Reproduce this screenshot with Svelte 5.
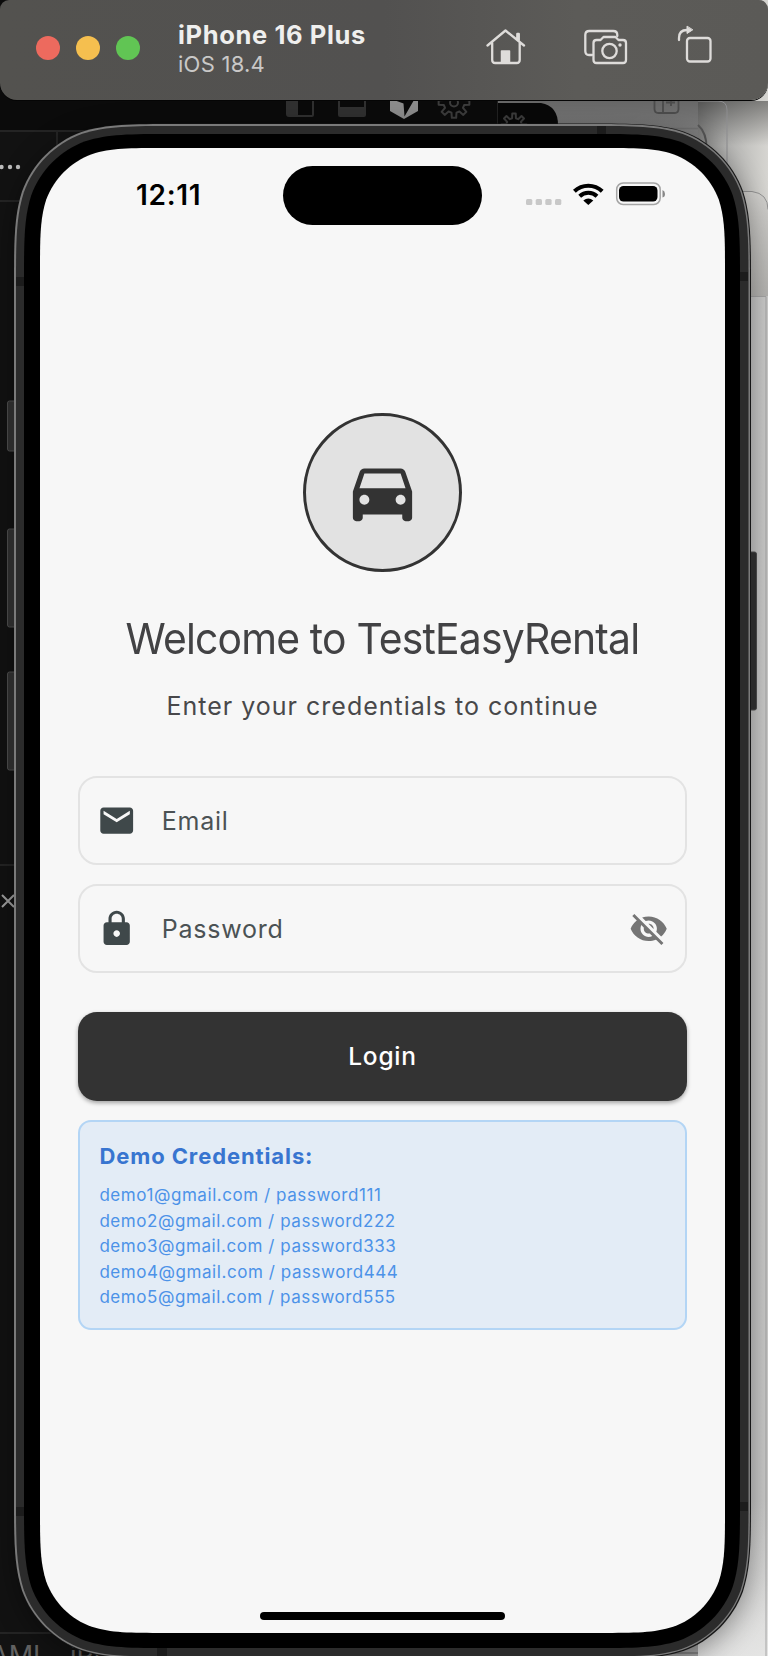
<script>
  const demoAccounts = [1, 2, 3, 4, 5].map((n) => `demo${n}@gmail.com / password${n}${n}${n}`);

  // Rounded rectangle with continuous-curvature corners.
  function squircle(x, y, w, h, r) {
    const a = 1.528665 * r, b = 1.08849 * r, c = 0.868407 * r, d = 0.631494 * r;
    const e = 0.0749114 * r, f = 0.372824 * r, g = 0.16906 * r;
    const X = x + w, Y = y + h;
    return `M${x + a} ${y}H${X - a}C${X - b} ${y} ${X - c} ${y} ${X - d} ${y + e}C${X - f} ${y + g} ${X - g} ${y + f} ${X - e} ${y + d}C${X} ${y + c} ${X} ${y + b} ${X} ${y + a}V${Y - a}C${X} ${Y - b} ${X} ${Y - c} ${X - e} ${Y - d}C${X - g} ${Y - f} ${X - f} ${Y - g} ${X - d} ${Y - e}C${X - c} ${Y} ${X - b} ${Y} ${X - a} ${Y}H${x + a}C${x + b} ${Y} ${x + c} ${Y} ${x + d} ${Y - e}C${x + f} ${Y - g} ${x + g} ${Y - f} ${x + e} ${Y - d}C${x} ${Y - c} ${x} ${Y - b} ${x} ${Y - a}V${y + a}C${x} ${y + b} ${x} ${y + c} ${x + e} ${y + d}C${x + g} ${y + f} ${x + f} ${y + g} ${x + d} ${y + e}C${x + c} ${y} ${x + b} ${y} ${x + a} ${y}Z`;
  }

  // Eight-toothed gear outline.
  function gear(cx, cy, outer, inner) {
    const points = [];
    for (let i = 0; i < 8; i++) {
      for (const [offset, r] of [[-0.24, inner], [-0.14, outer], [0.14, outer], [0.24, inner]]) {
        const t = (i * Math.PI) / 4 + offset;
        points.push(`${(cx + r * Math.cos(t)).toFixed(2)},${(cy + r * Math.sin(t)).toFixed(2)}`);
      }
    }
    return points.join(' ');
  }
</script>

<main class="stage">
  <svg class="backdrop" width="768" height="1656" viewBox="0 0 768 1656" aria-hidden="true">
    <defs>
      <linearGradient id="desk" x1="0" x2="1" y1="0" y2="0">
        <stop offset="0" stop-color="#8c8c8b" /><stop offset="0.4" stop-color="#b3b3b1" /><stop offset="1" stop-color="#d6d5d1" />
      </linearGradient>
      <linearGradient id="side" x1="0" x2="1" y1="0" y2="0">
        <stop offset="0" stop-color="#bcbcbc" /><stop offset="1" stop-color="#cbcbca" />
      </linearGradient>
      <linearGradient id="win" x1="0" x2="0" y1="0" y2="1">
        <stop offset="0" stop-color="#666" /><stop offset="1" stop-color="#949494" />
      </linearGradient>
      <linearGradient id="card" x1="0" x2="0" y1="0" y2="1">
        <stop offset="0" stop-color="#cfcecb" /><stop offset="1" stop-color="#b4b3b0" />
      </linearGradient>
      <linearGradient id="shade" x1="0" x2="0" y1="0" y2="1">
        <stop offset="0" stop-color="#000" stop-opacity="0.4" /><stop offset="1" stop-color="#000" stop-opacity="0" />
      </linearGradient>
      <linearGradient id="lift" x1="0" x2="0" y1="0" y2="1">
        <stop offset="0" stop-color="#f0f0ef" stop-opacity="0" /><stop offset="1" stop-color="#f0f0ef" stop-opacity="0.7" />
      </linearGradient>
      <filter id="soft" x="-20%" y="-10%" width="140%" height="120%"><feGaussianBlur stdDeviation="14" /></filter>
    </defs>

    <rect width="768" height="1656" fill="#121212" />
    <rect width="560" height="130" fill="#0b0b0b" />
    <path d="M0 131H110M57 131V190M0 201H20M0 865H16M0 1633H80" stroke="#242424" stroke-width="2" fill="none" />

    <rect x="698" y="0" width="70" height="1656" fill="url(#desk)" />
    <rect x="698" y="101" width="70" height="45" fill="url(#shade)" />
    <path d="M698 101h20q9 0 9 9v90" fill="none" stroke="#8d8d90" />
    <rect x="497" y="100" width="201" height="60" fill="url(#win)" />
    <path d="M660 128.500H698" stroke="#707070" stroke-width="1.500" />
    <path d="M497 103h44q17 3 17 22h-61z" fill="#080808" />
    <path d="M497.500 101V126" stroke="#222" />
    <path d="M698 125q9 8 8.500 24" fill="none" stroke="#555" stroke-width="2" />
    <path d="M740 192h12q16 2 16 18v87h-28z" fill="url(#card)" />
    <path d="M740 191.500h12q16 2 16 18" fill="none" stroke="#929292" />
    <rect x="698" y="296" width="70" height="1360" fill="url(#side)" />
    <rect x="698" y="1500" width="70" height="156" fill="url(#lift)" />
    <path d="M750 296.500H766V1656" fill="none" stroke="#a4a4a4" />
    <path d="M640 1600h58v56h-58z" fill="#a3a3a3" />
    <path d="M670 1653H698" stroke="#777" stroke-width="1.500" />

    <!-- Toolbar glyphs of the editor window underneath -->
    <path d="M286 100h28v15q0 2-2 2h-23q-3 0-3-3z" fill="#303030" /><path d="M298 100h14v15h-14z" fill="#0a0a0a" />
    <path d="M338 100h28v15q0 2-2 2h-24q-2 0-2-2z" fill="#303030" /><path d="M340 100h24v7h-24z" fill="#0a0a0a" />
    <path d="M390 100h28v11l-14 8-14-8z" fill="#8c8c8c" /><path d="M394 100h20l-9.500 16.500-1-13z" fill="#0a0a0a" />
    <g fill="none" stroke="#3c3c3c" stroke-width="2" stroke-linejoin="round">
      <polygon points={gear(454, 102.5, 15.5, 10.5)} />
      <circle cx="454" cy="102.500" r="4" />
      <polygon points={gear(514, 126, 12.5, 8)} />
    </g>
    <path d="M654.500 101v8q0 4 4 4h16q4 0 4-4v-8M663 101v12M666 102.500h9M671 101v5" fill="none" stroke="#4c4c4c" stroke-width="1.800" />
    <g fill="#bcbcbc"><circle cx="1.500" cy="167" r="2.200" /><circle cx="10" cy="167" r="2.200" /><circle cx="18" cy="167" r="2.200" /></g>
    <path d="M2 895l12 12M14 895l-12 12" stroke="#a0a0a0" stroke-width="2" />
    <text x="-10" y="1665" class="ghost">AML</text><text x="70" y="1665" class="ghost">iPhone</text>

    <path d={squircle(14, 130, 737, 1535, 107)} fill="#000" opacity="0.38" filter="url(#soft)" />

    <!-- Hardware buttons -->
    <g fill="#2b2b2b" stroke="#454545">
      <rect x="7.500" y="401" width="12" height="50" rx="2" /><rect x="7.500" y="529" width="12" height="98" rx="2" />
      <rect x="7.500" y="672" width="12" height="98" rx="2" /><rect x="744" y="552" width="12.500" height="158" rx="2" />
    </g>

    <!-- Phone body -->
    <path d={squircle(14, 123.5, 737, 1535.5, 107)} fill="#161616" />
    <path d={squircle(14, 124, 736, 1534, 107)} fill="#7a7a7a" />
    <path d={squircle(16, 126, 732.5, 1530.5, 105)} fill="#2b2b2b" />
    <path d="M597 126h9v9h-9zM157 1647h10v9h-10zM740 272h8v9h-8zM740 1502h8v9h-8zM16 277h8v9h-8zM16 1507h8v9h-8z" fill="#1c1c1c" />
    <path d={squircle(24, 134, 716, 1514, 97)} fill="#000" />
    <path d={squircle(40, 148, 685, 1485, 82)} fill="#f7f7f7" />
  </svg>

  <header class="toolbar">
    <div class="lights"><i class="red"></i><i class="amber"></i><i class="green"></i></div>
    <div class="device"><strong>iPhone 16 Plus</strong><span>iOS 18.4</span></div>
    <svg class="tools" width="240" height="60" viewBox="480 20 240 60" fill="none" stroke="#dedcda" stroke-width="2.300" stroke-linecap="round" stroke-linejoin="round">
      <path d="M487.500 45.500L505.500 30.500 524 45.500M492.200 43v17q0 3 3 3h21.500q3 0 3-3V43M517.300 38v-4h1.500V40" />
      <path d="M501.500 63V51h8v12z" fill="#dedcda" stroke-width="1.500" />
      <path d="M592 55h-3q-3.700 0-3.700-4V35q0-4 4-4h24q4 0 4 4v1" />
      <path d="M593.500 43q0-3 3-3h4l3-3h12l3 3h4.500q3 0 3 3v17q0 3-3 3h-26.500q-3 0-3-3z" />
      <circle cx="609.500" cy="51" r="7.200" /><circle cx="620" cy="45" r="1.700" fill="#dedcda" stroke="none" />
      <rect x="687" y="38" width="23.500" height="23.500" rx="3" />
      <path d="M679 40v-2q0-8 8-8h1" /><path d="M687 26.500v7l5.500-3.500z" fill="#dedcda" stroke-width="1" />
    </svg>
  </header>

  <section class="screen">
    <div class="status">
      <time>12:11</time>
      <div class="island"></div>
      <svg class="signals" width="140" height="24" viewBox="526 182 140 24">
        <g fill="#c8c8c8"><rect x="526" y="199" width="6.300" height="6" rx="1.500" /><rect x="535.700" y="199" width="6.300" height="6" rx="1.500" /><rect x="545.300" y="199" width="6.300" height="6" rx="1.500" /><rect x="555" y="199" width="6.300" height="6" rx="1.500" /></g>
        <g fill="none" stroke="#000" stroke-width="4"><path d="M574.400 191.300A20 20 0 0 1 602.200 191.300M579.700 196.300A12.500 12.500 0 0 1 597 196.300" /></g>
        <path d="M583.300 200.500q5-4 10 0l-5 4.500z" />
        <rect x="616.700" y="183" width="43.500" height="21.500" rx="6.500" fill="none" stroke="#a5a5a5" stroke-width="1.500" />
        <rect x="619" y="186" width="38.500" height="15.500" rx="4.500" /><path d="M662.500 190q2.500 1 2.500 4t-2.500 3.500z" fill="#888" />
      </svg>
    </div>

    <div class="content">
      <div class="badge">
        <svg width="79" height="79" viewBox="0 0 24 24" fill="#333"><path d="M18.920 6.010C18.720 5.420 18.160 5 17.500 5h-11c-.66 0-1.210.42-1.420 1.010L3 12v8c0 .55.45 1 1 1h1c.55 0 1-.45 1-1v-1h12v1c0 .55.45 1 1 1h1c.55 0 1-.45 1-1v-8l-2.080-5.990zM6.500 16c-.83 0-1.500-.67-1.500-1.500S5.670 13 6.500 13s1.500.67 1.500 1.500S7.330 16 6.500 16zm11 0c-.83 0-1.500-.67-1.500-1.500s.67-1.500 1.500-1.500 1.500.67 1.500 1.500-.67 1.500-1.500 1.500zM5 11l1.500-4.500h11L19 11H5z" /></svg>
      </div>
      <h1><span>Welcome to TestEasyRental</span></h1>
      <p class="hint">Enter your credentials to continue</p>

      <div class="field">
        <svg width="39.400" height="39.400" viewBox="0 0 24 24" fill="#3f484a"><path d="M20 4H4c-1.100 0-1.990.9-1.990 2L2 18c0 1.100.9 2 2 2h16c1.100 0 2-.9 2-2V6c0-1.100-.9-2-2-2zm0 4l-8 5-8-5V6l8 5 8-5v2z" /></svg>
        <span>Email</span>
      </div>
      <div class="field second">
        <svg width="39.400" height="39.400" viewBox="0 0 24 24" fill="#3f484a"><path d="M18 8h-1V6c0-2.760-2.240-5-5-5S7 3.240 7 6v2H6c-1.100 0-2 .9-2 2v10c0 1.100.9 2 2 2h12c1.100 0 2-.9 2-2V10c0-1.100-.9-2-2-2zm-6 9c-1.100 0-2-.9-2-2s.9-2 2-2 2 .9 2 2-.9 2-2 2zm3.100-9H8.900V6c0-1.710 1.390-3.100 3.100-3.100 1.710 0 3.100 1.390 3.100 3.100v2z" /></svg>
        <span>Password</span>
        <svg class="eye" width="39.400" height="39.400" viewBox="0 0 24 24" fill="#757575"><path d="M12 7c2.760 0 5 2.240 5 5 0 .65-.13 1.260-.36 1.830l2.920 2.920c1.510-1.260 2.700-2.890 3.430-4.750-1.730-4.390-6-7.500-11-7.500-1.400 0-2.740.25-3.980.7l2.160 2.160C10.740 7.130 11.350 7 12 7zM2 4.270l2.280 2.280.46.46C3.080 8.300 1.780 10.020 1 12c1.730 4.390 6 7.500 11 7.500 1.550 0 3.030-.3 4.380-.84l.42.42L19.730 22 21 20.730 3.270 3 2 4.270zM7.530 9.800l1.550 1.550c-.05.21-.08.43-.08.65 0 1.660 1.340 3 3 3 .22 0 .44-.03.65-.08l1.550 1.550c-.67.33-1.410.53-2.200.53-2.760 0-5-2.240-5-5 0-.79.2-1.530.53-2.200zm4.310-.78l3.150 3.150.02-.16c0-1.660-1.340-3-3-3l-.17.010z" /></svg>
      </div>

      <button type="button">Login</button>

      <div class="demo">
        <h2>Demo Credentials:</h2>
        {#each demoAccounts as account}<p>{account}</p>{/each}
      </div>
    </div>
    <div class="homebar"></div>
  </section>
</main>

<style>
  :global(body) { margin: 0; background: #101010; }
  .stage { position: relative; width: 768px; height: 1656px; overflow: hidden; font-family: Inter, "Liberation Sans", sans-serif; font-kerning: normal; }
  .backdrop { position: absolute; left: 0; top: 0; }
  .ghost { font-size: 27px; fill: #626262; }
  h1, h2, p { margin: 0; }

  .toolbar { position: relative; box-sizing: border-box; height: 100px; display: flex; align-items: flex-start; padding: 0 48px 0 36px; border-radius: 9px 9px 17px 17px; background: linear-gradient(90deg, #53524f, #525150 50%, #5c5b58 75%, #5b5a57); box-shadow: 0 1px 0 #050505; }
  .lights { display: flex; gap: 16px; padding-top: 36px; }
  .lights i { width: 24px; height: 24px; border-radius: 50%; }
  .red { background: #ed6a5e; }
  .amber { background: #f5bf4f; }
  .green { background: #61c554; }
  .device { display: flex; flex-direction: column; width: 220px; padding: 20px 0 0 38px; white-space: nowrap; }
  .device strong { font-size: 25.500px; line-height: 30px; letter-spacing: .62px; color: #efefee; font-weight: 700; }
  .device span { font-size: 22px; line-height: 28px; letter-spacing: .25px; color: #c9c8c7; }
  .tools { margin: 20px 0 0 auto; }

  .screen { position: relative; display: flex; flex-direction: column; width: 685px; height: 1485px; margin: 48px 0 0 40px; }
  .status { display: flex; align-items: flex-start; height: 77px; padding-top: 18px; box-sizing: border-box; }
  time { width: 147px; padding: 13px 0 0 96px; font-size: 28px; line-height: 32px; letter-spacing: .7px; font-weight: 600; }
  .island { width: 199px; height: 58.500px; border-radius: 30px; background: #000; }
  .signals { margin: 16px 0 0 44px; }

  .content { display: flex; flex-direction: column; margin: 187px 38.400px 0 38.400px; }
  .badge { box-sizing: border-box; width: 159.500px; height: 159.500px; margin-top: .5px; align-self: center; border: 3px solid #333; border-radius: 50%; background: #e2e2e2; display: grid; place-items: center; }
  .badge svg { margin-top: -1px; }
  h1 { margin-top: 40px; font-size: 43px; line-height: 52px; font-weight: 400; letter-spacing: -.85px; color: #424244; text-align: center; white-space: nowrap; }
  h1 span { display: inline-block; transform: scaleX(.95); }
  .hint { margin-top: 27px; font-size: 25px; line-height: 30px; letter-spacing: 1px; color: #48484a; text-align: center; }
  .field { box-sizing: border-box; height: 89px; margin-top: 55px; padding: 0 16px 0 17px; border: 2px solid #e3e3e3; border-radius: 19px; display: flex; align-items: center; font-size: 25px; letter-spacing: .75px; color: #4b5254; }
  .field.second { margin-top: 19px; }
  .field span { margin-left: 25px; padding-top: 1px; }
  .eye { margin-left: auto; }
  button { height: 89px; margin-top: 39px; padding: 0 0 1px; border: 0; border-radius: 19px; background: #333; color: #fff; font: 500 24.500px Inter, sans-serif; letter-spacing: .75px; box-shadow: 0 2px 4px rgba(0, 0, 0, .35); }
  .demo { box-sizing: border-box; height: 210px; margin-top: 19px; padding: 21px 19px; border: 2px solid #b3d5f5; border-radius: 13px; background: #e3ecf6; }
  h2 { margin-bottom: 14px; font-size: 22px; line-height: 26px; letter-spacing: .9px; font-weight: 650; color: #3875d0; }
  .demo p { font-size: 17px; line-height: 25.600px; letter-spacing: .56px; color: #4c92e8; }
  .homebar { width: 245px; height: 8px; margin: auto 0 13px 220px; border-radius: 4px; background: #000; }
</style>
